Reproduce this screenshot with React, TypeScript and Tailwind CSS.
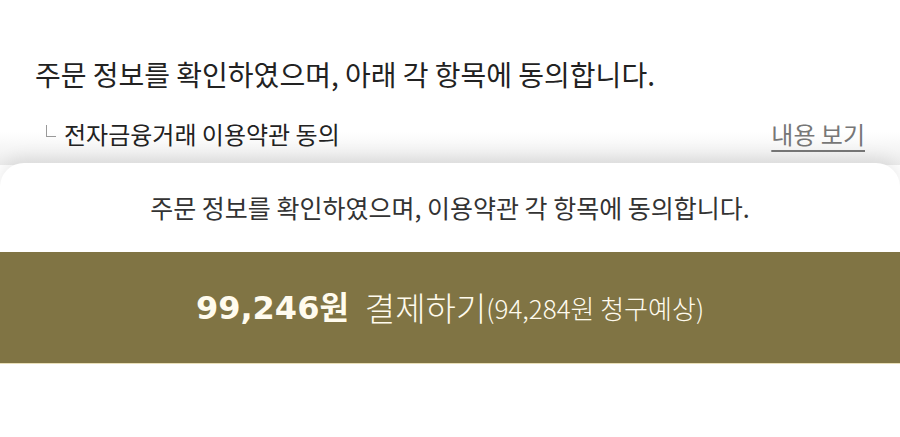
export default function App() {
  return (
    <div
      className="w-[900px] h-[437px] overflow-hidden bg-white flex flex-col"
      style={{ fontFamily: '"Noto Sans CJK KR", "Noto Sans", sans-serif' }}
    >
      {/* Agreement section */}
      <div className="h-[165px] shrink-0 flex flex-col bg-gradient-to-b from-white from-[80%] to-[#ececec]">
        <p className="mt-[55px] pl-[35px] text-[28px] leading-[38px] text-[#222]">
          주문 정보를 확인하였으며, 아래 각 항목에 동의합니다.
        </p>
        <div className="mt-[26px] flex items-center justify-between pl-[46px] pr-[35px]">
          <div className="flex items-center gap-[8px]">
            <span className="w-[10px] h-[12px] border-l border-b border-[#999] -mt-[6px]" />
            <span className="text-[24px] leading-[30px] text-[#222]">
              전자금융거래 이용약관 동의
            </span>
          </div>
          <a className="text-[24px] leading-[30px] text-[#777] underline underline-offset-[6px] decoration-[#777]">
            내용 보기
          </a>
        </div>
      </div>

      {/* Bottom sheet */}
      <div className="flex-1 -mt-[2px] bg-white rounded-t-[24px] shadow-[0_-6px_16px_rgba(0,0,0,0.08)] flex flex-col">
        <p className="h-[89px] flex items-center justify-center text-[25px] text-[#333]">
          주문 정보를 확인하였으며, 이용약관 각 항목에 동의합니다.
        </p>
        <button className="h-[112px] w-full bg-[#807444] border-b border-[#e9dfb8] flex items-center justify-center text-[#fffbee]">
          <span
            className="text-[32px] font-bold"
            style={{ fontFamily: '"DejaVu Sans", "Noto Sans CJK KR", sans-serif' }}
          >
            99,246원
          </span>
          <span className="ml-[16px] text-[33px] font-light">결제하기</span>
          <span className="text-[26px] font-light">(94,284원 청구예상)</span>
        </button>
      </div>
    </div>
  );
}
